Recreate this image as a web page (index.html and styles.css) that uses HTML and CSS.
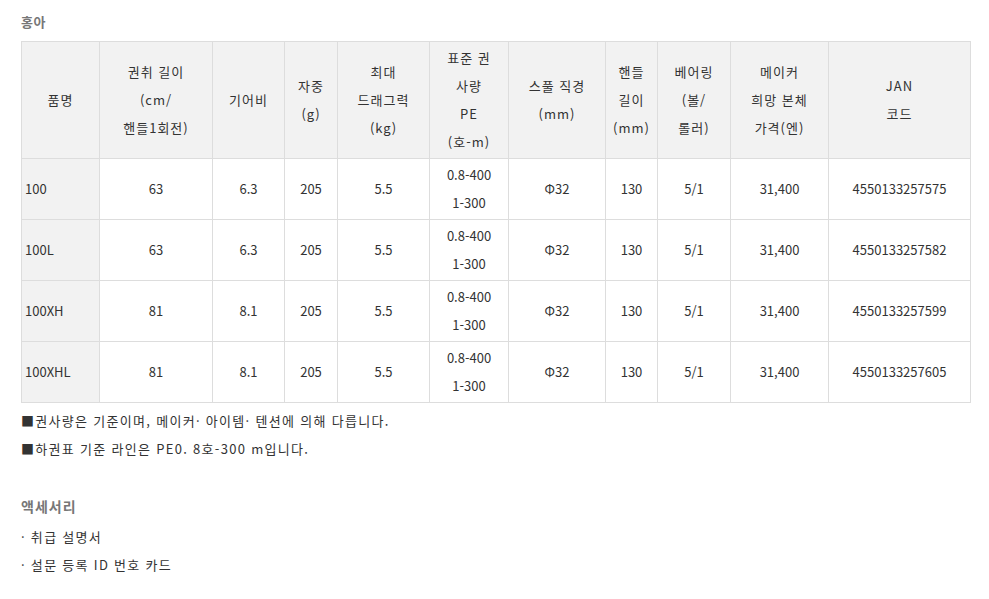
FILE: index.html
```html
<!DOCTYPE html>
<html lang="ko">
<head>
<meta charset="utf-8">
<link rel="stylesheet" href="styles.css">
</head>
<body>
<div class="page">
  <h3 class="title">홍아</h3>
  <table class="spec">
    <colgroup>
      <col style="width:78px"><col style="width:113px"><col style="width:72px"><col style="width:53px">
      <col style="width:92px"><col style="width:79px"><col style="width:97px"><col style="width:52px">
      <col style="width:73px"><col style="width:98px"><col style="width:142px">
    </colgroup>
    <thead>
      <tr>
        <th>품명</th>
        <th>권취 길이<br>(cm/<br>핸들1회전)</th>
        <th>기어비</th>
        <th>자중<br>(g)</th>
        <th>최대<br>드래그력<br>(kg)</th>
        <th>표준 권<br>사량<br>PE<br>(호-m)</th>
        <th>스풀 직경<br>(mm)</th>
        <th>핸들<br>길이<br>(mm)</th>
        <th>베어링<br>(볼/<br>롤러)</th>
        <th>메이커<br>희망 본체<br>가격(엔)</th>
        <th>JAN<br>코드</th>
      </tr>
    </thead>
    <tbody>
      <tr>
        <td class="name">100</td><td>63</td><td>6.3</td><td>205</td><td>5.5</td><td>0.8-400<br>1-300</td><td>Φ32</td><td>130</td><td>5/1</td><td>31,400</td><td>4550133257575</td>
      </tr>
      <tr>
        <td class="name">100L</td><td>63</td><td>6.3</td><td>205</td><td>5.5</td><td>0.8-400<br>1-300</td><td>Φ32</td><td>130</td><td>5/1</td><td>31,400</td><td>4550133257582</td>
      </tr>
      <tr>
        <td class="name">100XH</td><td>81</td><td>8.1</td><td>205</td><td>5.5</td><td>0.8-400<br>1-300</td><td>Φ32</td><td>130</td><td>5/1</td><td>31,400</td><td>4550133257599</td>
      </tr>
      <tr>
        <td class="name">100XHL</td><td>81</td><td>8.1</td><td>205</td><td>5.5</td><td>0.8-400<br>1-300</td><td>Φ32</td><td>130</td><td>5/1</td><td>31,400</td><td>4550133257605</td>
      </tr>
    </tbody>
  </table>
  <p class="note">■권사량은 기준이며, 메이커· 아이템· 텐션에 의해 다릅니다.</p>
  <p class="note">■하권표 기준 라인은 PE0. 8호-300 m입니다.</p>
  <h3 class="title sub">액세서리</h3>
  <p class="note">· 취급 설명서</p>
  <p class="note">· 설문 등록 ID 번호 카드</p>
</div>
</body>
</html>
```

FILE: styles.css
```css
html, body {
  margin: 0;
  padding: 0;
  background: #fff;
}
body {
  font-family: "Noto Sans CJK KR", "Noto Sans", sans-serif;
  font-size: 13px;
  color: #333;
}
.page {
  padding: 12px 0 0 21px;
}
.title {
  margin: 0;
  height: 29px;
  font-size: 13px;
  line-height: 20px;
  font-weight: bold;
  color: #777;
  letter-spacing: 0.5px;
}
.title.sub {
  margin-top: 33px;
  height: 27px;
  font-size: 14px;
  letter-spacing: 1px;
}
.spec {
  border-collapse: collapse;
  table-layout: fixed;
  width: 950px;
  margin-bottom: 4px;
}
.spec th, .spec td {
  border: 1px solid #ddd;
  text-align: center;
  vertical-align: middle;
  font-weight: normal;
  line-height: 28px;
  padding: 2px 0;
  color: #333;
}
.spec th {
  background: #f2f2f2;
  letter-spacing: 1px;
}
.spec td {
  background: #fff;
}
.spec td.name {
  background: #f2f2f2;
  text-align: left;
  padding-left: 3px;
}
.note {
  margin: 0;
  line-height: 28px;
  color: #333;
  letter-spacing: 1.3px;
}
```
